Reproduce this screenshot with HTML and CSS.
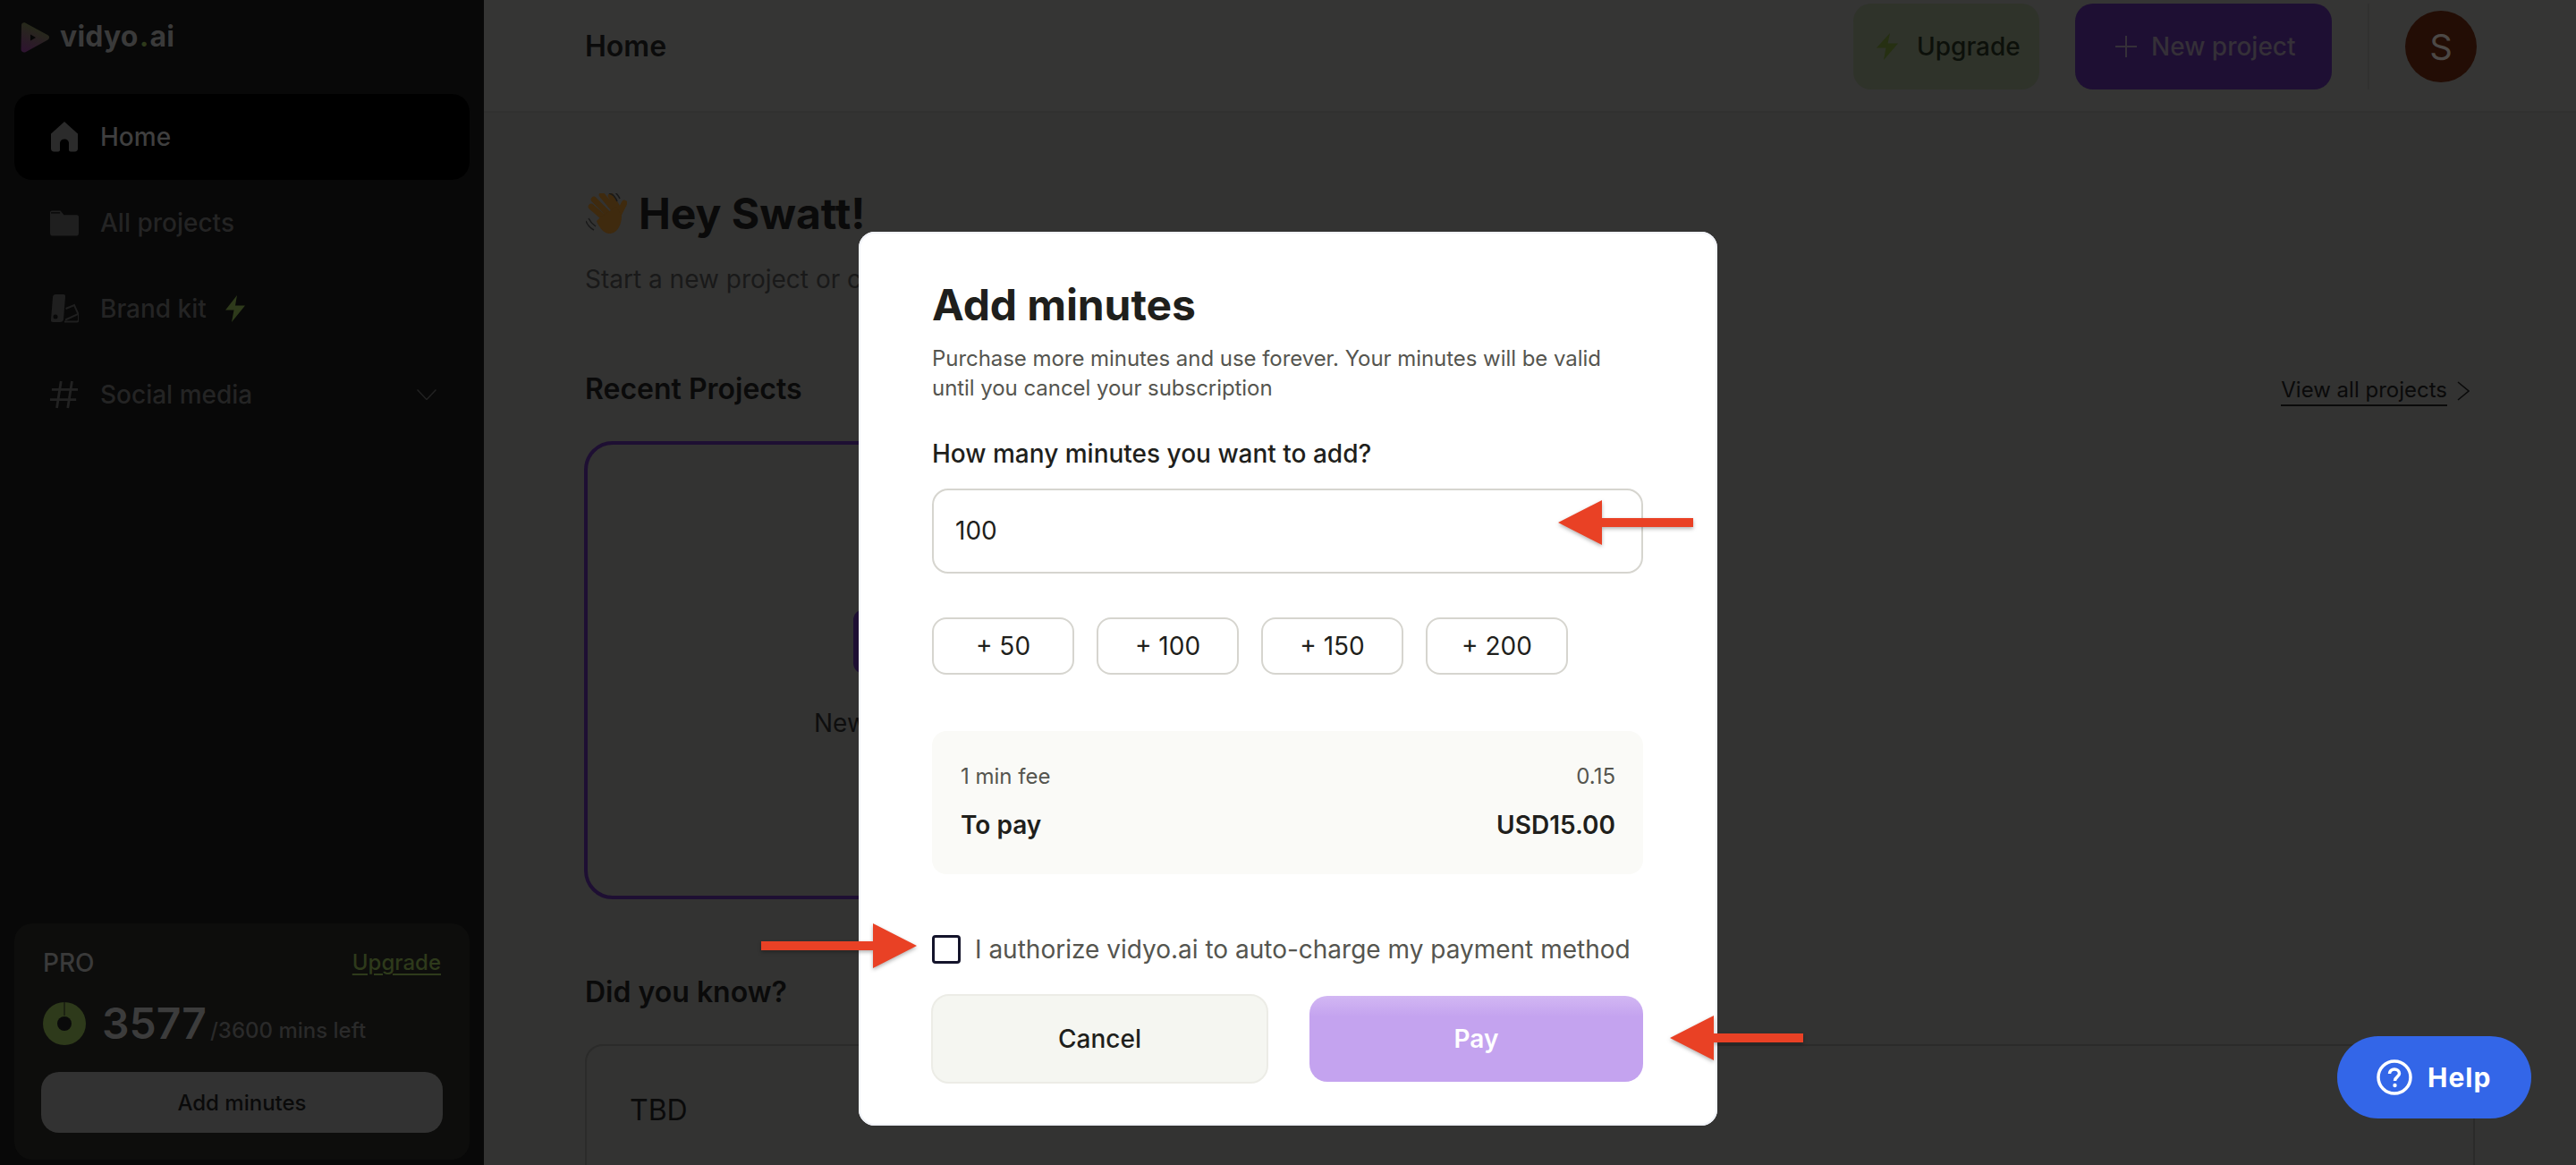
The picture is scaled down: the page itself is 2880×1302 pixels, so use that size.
FILE: index.html
```html
<!DOCTYPE html>
<html lang="en">
<head>
<meta charset="utf-8">
<title>vidyo.ai - Add minutes</title>
<link rel="stylesheet" href="styles.css">
</head>
<body>
<div class="app">
  <aside class="sidebar">
    <div class="logo">
      <svg class="logo-mark" width="34" height="34" viewBox="0 0 34 34">
        <defs><linearGradient id="lg" x1="0.2" y1="1" x2="0.6" y2="0"><stop offset="0" stop-color="#2e1430"/><stop offset="0.45" stop-color="#2a1f24"/><stop offset="1" stop-color="#252e16"/></linearGradient></defs>
        <path d="M2 3.500C2 .9 4.400-.4 6.600.7L31.500 14.300C33.500 15.400 33.500 18.300 31.500 19.400L7 33C4.500 34.300 1.500 33 1.500 30Z" fill="url(#lg)"/>
        <path d="M12 13.500L18 17L12 20.500Z" fill="#060606"/>
      </svg>
      <span class="logo-text">vidyo<span class="logo-dot">.</span>ai</span>
    </div>
    <nav class="nav">
      <a class="nav-item active">
        <span class="nav-icon"><svg width="32" height="34" viewBox="0 0 32 34"><path d="M16 0L31 13.500V30C31 32.200 29.800 33.500 27.500 33.500H23C21.800 33.500 21 32.700 21 31.500V24C21 21.500 19 19.500 16 19.500S11 21.500 11 24V31.500C11 32.700 10.200 33.500 9 33.500H4.500C2.200 33.500 1 32.200 1 30V13.500Z" fill="#2b2b2b"/></svg></span>
        <span>Home</span>
      </a>
      <a class="nav-item">
        <span class="nav-icon"><svg width="33" height="30" viewBox="0 0 33 30"><path d="M2 1H12L16 6H31C32 6 33 7 33 8V27C33 28.800 32 30 30 30H3C1 30 0 28.800 0 27V3C0 2 1 1 2 1Z" fill="#1f1f1f"/><path d="M1 3.500H11.500" stroke="#0a0a0a" stroke-width="1.500"/></svg></span>
        <span>All projects</span>
      </a>
      <a class="nav-item">
        <span class="nav-icon"><svg width="32" height="34" viewBox="11 8 32 34"><path d="M17 9H26Q28.500 9 28 12L26 37Q25.500 40 22 40H14Q11.500 40 12 37L14 12Q14.500 9 17 9Z" fill="#1f1f1f"/><circle cx="17" cy="34" r="2.500" fill="#080808"/><path d="M28.500 25L38 21L42.500 31L28 37.500M27 39.500H41Q43 39.500 43 37V31" fill="none" stroke="#1f1f1f" stroke-width="2"/></svg></span>
        <span>Brand kit</span>
        <svg class="nav-bolt" width="22" height="30" viewBox="0 0 22 30"><path d="M13 0L11 11.500H22L7 30L9.500 16.500H0Z" fill="#2e3a1b"/></svg>
      </a>
      <a class="nav-item">
        <span class="nav-icon"><svg width="34" height="34" viewBox="0 0 34 34"><path d="M13 1L8 33M26 1L21 33M2 11H33M0 23H31" fill="none" stroke="#222" stroke-width="3"/></svg></span>
        <span>Social media</span>
        <svg class="nav-chevron" width="22" height="12" viewBox="0 0 22 12"><path d="M.5.5L11 11.500L21.500.5" fill="none" stroke="#222" stroke-width="1.500"/></svg>
      </a>
    </nav>
    <section class="plan">
      <div class="plan-head">
        <span class="plan-name">PRO</span>
        <a class="plan-upgrade">Upgrade</a>
      </div>
      <div class="plan-stat">
        <svg class="plan-donut" width="48" height="48" viewBox="0 0 48 48"><circle cx="24" cy="24" r="24" fill="#2e3a1b"/><circle cx="24" cy="24" r="8" fill="#0a0a0a"/><path d="M24 0V15" stroke="#0d0d0c" stroke-width="1"/></svg>
        <span class="plan-count">3577</span>
        <span class="plan-total">/3600 mins left</span>
      </div>
      <button class="plan-add">Add minutes</button>
    </section>
  </aside>

  <main class="main">
    <header class="topbar">
      <h1 class="topbar-title">Home</h1>
      <div class="topbar-actions">
        <button class="btn-upgrade">
          <svg width="24" height="30" viewBox="0 0 24 30"><path d="M15 0L12.500 11.500H24L8 30L10.500 16.500H0Z" fill="#263012"/></svg>
          <span>Upgrade</span>
        </button>
        <button class="btn-new">
          <svg width="24" height="24" viewBox="0 0 24 24"><path d="M12 0V24M0 12H24" stroke="#353038" stroke-width="2"/></svg>
          <span>New project</span>
        </button>
        <span class="topbar-divider"></span>
        <span class="avatar">S</span>
      </div>
    </header>
    <div class="content">
      <div class="greeting">
        <svg class="wave" width="46" height="46" viewBox="10 11 46 46">
          <g fill="none" stroke="#3f2a0e" stroke-width="6.500" stroke-linecap="round"><path d="M16 26L32 40M19 18L35 34M28 13L42 30M38 14L46 28M53 22L46 36"/></g>
          <path d="M26 38L44 26L50 36C50 48 44 56 36 56C30 56 24 48 22 42Z" fill="#3f2a0e"/>
          <path d="M36 11C40 12 43 15 45 20M38 7C43 9 46 13 48 17M10 42C12 47 15 50 19 52M13 39C15 43 18 46 21 48" fill="none" stroke="#191919" stroke-width="1.500"/>
        </svg>
        <h2 class="greeting-title">Hey Swatt!</h2>
      </div>
      <p class="greeting-sub">Start a new project or choose</p>
      <div class="section-head">
        <h3 class="section-title">Recent Projects</h3>
        <a class="view-all"><span>View all projects</span><svg width="14" height="22" viewBox="0 0 14 22"><path d="M1 1L13 11L1 21" fill="none" stroke="#0a0a0a" stroke-width="1.500"/></svg></a>
      </div>
      <div class="new-card">
        <span class="new-card-btn"></span>
        <span class="new-card-label">New project</span>
      </div>
      <h3 class="section-title know-title">Did you know?</h3>
      <div class="tip-card">TBD</div>
    </div>
  </main>
</div>

<button class="help">
  <svg width="40" height="40" viewBox="0 0 40 40"><circle cx="20" cy="20" r="18" fill="none" stroke="#fff" stroke-width="3.500"/><path d="M14.500 16C14.500 12.800 17 11 20 11S25.500 13 25.500 15.800C25.500 19.500 20.500 19.500 20.500 24" fill="none" stroke="#fff" stroke-width="3.500"/><circle cx="20.500" cy="29" r="2.200" fill="#fff"/></svg>
  <span>Help</span>
</button>

<div class="modal" role="dialog">
  <h2 class="modal-title">Add minutes</h2>
  <p class="modal-desc">Purchase more minutes and use forever. Your minutes will be valid until you cancel your subscription</p>
  <label class="modal-label">How many minutes you want to add?</label>
  <div class="modal-input">100</div>
  <div class="chips">
    <button class="chip">+ 50</button>
    <button class="chip">+ 100</button>
    <button class="chip">+ 150</button>
    <button class="chip">+ 200</button>
  </div>
  <div class="summary">
    <div class="summary-row fee"><span>1 min fee</span><span>0.15</span></div>
    <div class="summary-row total"><span>To pay</span><span>USD15.00</span></div>
  </div>
  <div class="authorize">
    <span class="checkbox"></span>
    <span>I authorize vidyo.ai to auto-charge my payment method</span>
  </div>
  <div class="modal-actions">
    <button class="btn-cancel">Cancel</button>
    <button class="btn-pay">Pay</button>
  </div>
</div>

<svg class="arrows" width="2880" height="1302" viewBox="0 0 2880 1302">
  <polygon points="1742,584 1791,559 1791,579 1893,579 1893,589 1791,589 1791,609" />
  <polygon points="1025,1057 976,1032 976,1052 851,1052 851,1062 976,1062 976,1082" />
  <polygon points="1867,1160 1916,1135 1916,1155 2016,1155 2016,1165 1916,1165 1916,1185" />
</svg>
</body>
</html>
```

FILE: styles.css
```css
* { box-sizing: border-box; }
html, body { margin: 0; height: 1302px; overflow: hidden; }
body { font-family: Inter, "Liberation Sans", sans-serif; background: #333332; color: #0a0a0a; position: relative; }
h1, h2, h3, p { margin: 0; }
button { font-family: inherit; border: 0; padding: 0; }

.app { display: flex; height: 1302px; }

/* sidebar */
.sidebar { width: 541px; flex: none; height: 100%; background: #080808; display: flex; flex-direction: column; padding: 0 16px 6px; }
.logo { height: 105px; display: flex; align-items: flex-start; padding: 25px 0 0 6px; gap: 11px; }
.logo-mark { flex: none; }
.logo-text { font-weight: 700; font-size: 32px; line-height: 32px; color: #3a3a3a; letter-spacing: 0.2px; }
.logo-dot { color: #2e3a1b; margin: 0 1px; }
.nav { display: flex; flex-direction: column; }
.nav-item { height: 96px; display: flex; align-items: center; padding: 0 37px 0 40px; font-size: 28px; font-weight: 500; color: #242424; }
.nav-item.active { background: #000; border-radius: 20px; color: #3f3f3f; }
.nav-icon { width: 32px; margin-right: 24px; display: flex; align-items: center; flex: none; }
.nav-bolt { margin-left: 21px; }
.nav-chevron { margin-left: auto; }

.plan { margin-top: auto; height: 264px; background: #0d0d0c; border-radius: 20px; padding: 26px 30px 0; }
.plan-head { display: flex; justify-content: space-between; align-items: center; line-height: 36px; padding: 0 2px; }
.plan-name { font-size: 28px; font-weight: 500; color: #3a3a3a; }
.plan-upgrade { font-size: 24px; font-weight: 500; color: #2e3a1b; text-decoration: underline; text-underline-offset: 4px; }
.plan-stat { display: flex; align-items: flex-end; height: 48px; margin: 26px 0 0 2px; }
.plan-donut { flex: none; margin-right: 18px; }
.plan-count { font-size: 48px; font-weight: 600; line-height: 48px; color: #3c3c3c; }
.plan-total { font-size: 24px; font-weight: 500; line-height: 32px; color: #2a2a2a; margin-left: 4px; }
.plan-add { display: block; width: 100%; height: 68px; margin-top: 30px; background: #323232; border-radius: 20px; font-size: 24px; font-weight: 500; color: #0a0a0a; }

/* main */
.main { flex: 1; min-width: 0; height: 100%; overflow: hidden; }
.topbar { height: 126px; display: flex; justify-content: space-between; padding: 4px 111px 0 113px; background: #353534; border-bottom: 2px solid #313130; }
.topbar-title { font-size: 32px; font-weight: 600; line-height: 96px; color: #0b0b0b; }
.topbar-actions { display: flex; align-items: flex-start; }
.btn-upgrade { width: 208px; height: 96px; border-radius: 20px; background: #2f332a; color: #0c100a; font-size: 28px; font-weight: 500; display: flex; align-items: center; gap: 21px; padding-left: 26px; }
.btn-new { width: 287px; height: 96px; margin-left: 40px; border-radius: 20px; background: #1e0f33; color: #353038; font-size: 28px; font-weight: 500; display: flex; align-items: center; gap: 16px; padding-left: 45px; }
.topbar-divider { width: 2px; height: 96px; margin: 0 40px; background: #313130; }
.avatar { width: 80px; height: 80px; margin-top: 8px; border-radius: 50%; background: #230d05; color: #4c4846; font-size: 40px; display: flex; align-items: center; justify-content: center; }

.content { padding: 85px 113px 0; }
.greeting { display: flex; align-items: center; gap: 13px; height: 56px; margin-left: 1px; }
.wave { flex: none; }
.greeting-title { font-size: 48px; font-weight: 700; line-height: 56px; color: #0a0a0a; }
.greeting-sub { font-size: 28px; line-height: 36px; margin-top: 27px; color: #191919; white-space: nowrap; }
.section-head { display: flex; justify-content: space-between; align-items: center; margin-top: 85px; padding-right: 6px; }
.section-title { font-size: 32px; font-weight: 600; line-height: 40px; color: #0a0a0a; }
.view-all { display: flex; align-items: center; gap: 11px; font-size: 24px; color: #0a0a0a; margin-top: 3px; }
.view-all span { border-bottom: 2px solid #0a0a0a; line-height: 32px; }
.new-card { width: 674px; height: 512px; margin: 38px 0 0 -1px; border: 4px solid #1e0f33; border-radius: 32px; padding-top: 184px; display: flex; flex-direction: column; align-items: center; }
.new-card-btn { width: 72px; height: 72px; border-radius: 12px; background: #1e0f33; }
.new-card-label { font-size: 28px; line-height: 36px; margin-top: 37px; color: #0e0e0e; }
.know-title { margin-top: 84px; }
.tip-card { margin-top: 38px; height: 200px; border: 2px solid #2b2b2a; border-radius: 20px; padding: 52px 48px 0; font-size: 32px; line-height: 40px; color: #0a0a0a; }

/* help */
.help { position: absolute; left: 2613px; top: 1158px; width: 217px; height: 92px; border-radius: 46px; background: #3366e8; color: #fff; font-size: 30px; font-weight: 700; letter-spacing: 1px; display: flex; align-items: center; gap: 17px; padding-left: 44px; }

/* modal */
.modal { position: absolute; left: 960px; top: 259px; width: 960px; height: 999px; background: #fff; border-radius: 18px; padding: 52px 83px 0 82px; box-shadow: inset 0 0 0 2px #f1f3f8; }
.modal-title { font-size: 48px; font-weight: 700; line-height: 60px; letter-spacing: -0.1px; color: #1f1f1c; }
.modal-desc { font-size: 24px; line-height: 33px; margin-top: 13px; color: #55554f; letter-spacing: -0.05px; }
.modal-label { display: block; font-size: 28px; font-weight: 500; line-height: 36px; margin-top: 39px; color: #1f1f1c; }
.modal-input { height: 95px; margin-top: 21px; border: 2px solid #d6d5cf; border-radius: 18px; padding-left: 24px; font-size: 28px; line-height: 91px; color: #1f1f1c; }
.chips { display: flex; gap: 25px; margin-top: 49px; }
.chip { width: 159px; height: 64px; background: #fff; border: 2px solid #d6d5cf; border-radius: 16px; font-size: 28px; color: #1f1f1c; }
.summary { height: 160px; margin-top: 63px; background: #fafaf7; border-radius: 16px; padding: 35px 31px 0 32px; }
.summary-row { display: flex; justify-content: space-between; }
.fee { font-size: 24px; line-height: 32px; color: #55554f; }
.total { font-size: 28px; font-weight: 600; line-height: 36px; margin-top: 20px; color: #1f1f1c; }
.authorize { display: flex; align-items: center; gap: 16px; margin-top: 66px; height: 36px; font-size: 28px; color: #55554f; white-space: nowrap; }
.checkbox { width: 32px; height: 32px; flex: none; border: 3px solid #14142b; border-radius: 4px; background: #fff; }
.modal-actions { display: flex; justify-content: space-between; align-items: center; margin: 32px 0 0 -1px; }
.btn-cancel { width: 377px; height: 100px; background: #f5f6f1; border: 2px solid #ecece6; border-radius: 20px; font-size: 28px; font-weight: 500; color: #1f1f1c; }
.btn-pay { width: 373px; height: 96px; background: linear-gradient(#d2b7f3, #c4a3ef 24%); border-radius: 20px; font-size: 28px; font-weight: 600; color: #fff; }

/* annotation arrows */
.arrows { position: absolute; left: 0; top: 0; pointer-events: none; filter: drop-shadow(0 2px 2px rgba(0,0,0,.3)); }
.arrows polygon { fill: #e94125; }
```
